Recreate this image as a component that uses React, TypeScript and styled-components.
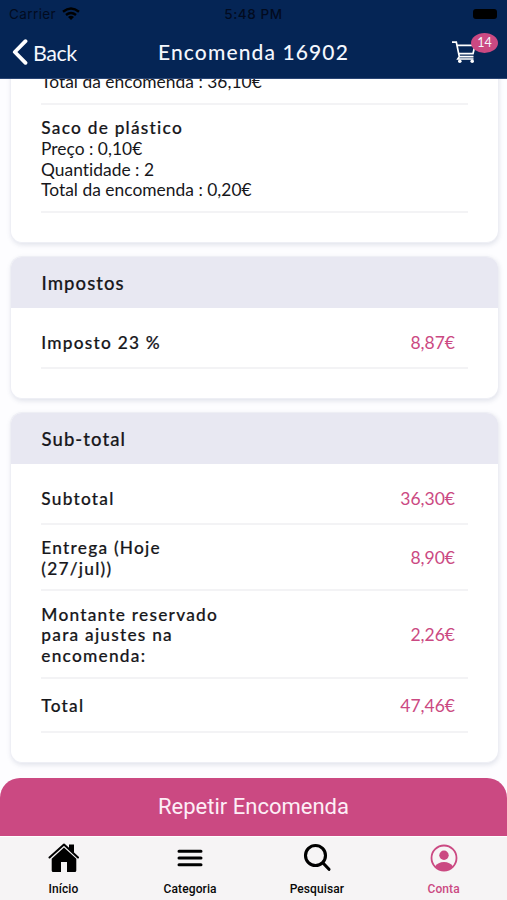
import React from 'react';
import styled, { createGlobalStyle } from 'styled-components';

const PINK = '#cb4982';

const GlobalStyle = createGlobalStyle`
  * { box-sizing: border-box; }
  body { margin: 0; background: #fdfdff; font-family: Lato, "Open Sans", sans-serif; font-variant-ligatures: none; color: #17171b; }
`;

const Screen = styled.div`
  display: flex;
  flex-direction: column;
  width: 507px;
  height: 900px;
  overflow: hidden;
`;

const Header = styled.header`
  flex: none;
  height: 79px;
  background: #052555;
  border-bottom: 1px solid #2b4674;
`;

const StatusBar = styled.div`
  display: grid;
  grid-template-columns: 1fr auto 1fr;
  align-items: center;
  height: 27px;
  padding: 0 9px;
  font-family: Inter, sans-serif;
  font-size: 13.5px;
  color: #020b1f;
`;

const Carrier = styled.div`
  display: flex;
  align-items: center;
  gap: 6px;
  letter-spacing: 0.4px;
`;

const Clock = styled.div`
  font-weight: 500;
  font-size: 13.5px;
  letter-spacing: 0.6px;
`;

const Battery = styled.div`
  justify-self: end;
  width: 24px;
  height: 10px;
  margin-right: 1px;
  border-radius: 3px;
  background: #000;
`;

const NavBar = styled.div`
  display: grid;
  grid-template-columns: 1fr auto 1fr;
  align-items: center;
  height: 50px;
  padding: 0 9px 0 12px;
  color: #f4f7fd;
`;

const BackButton = styled.div`
  display: flex;
  align-items: center;
  gap: 5px;
  font-size: 21.5px;
  letter-spacing: -0.45px;
`;

const BackText = styled.span`
  padding-top: 2px;
`;

const Title = styled.div`
  margin: -2px 3px 0 0;
  font-size: 21px;
  font-weight: 500;
  letter-spacing: 1.12px;
`;

const Cart = styled.div`
  position: relative;
  justify-self: end;
  width: 46px;
  height: 34px;
`;

const CartIcon = styled.svg`
  display: block;
  margin: 6px 0 0;
`;

const Badge = styled.span`
  position: absolute;
  top: -2px;
  right: 0;
  width: 27px;
  height: 20px;
  border-radius: 50%;
  background: ${PINK};
  font-size: 12.5px;
  line-height: 19px;
  text-align: center;
`;

const Content = styled.main`
  flex: 1;
  min-height: 0;
  display: flex;
  flex-direction: column;
  gap: 13px;
  padding: 0 9px 0 10px;
  overflow: hidden;
`;

const Card = styled.section<{ $height: number; $scrolled?: boolean }>`
  flex: none;
  height: ${(p) => p.$height}px;
  margin-top: ${(p) => (p.$scrolled ? '-20px' : '0')};
  border: 1px solid #eeeff5;
  border-right-width: 0;
  border-radius: 12px;
  background: #fff;
  box-shadow: 1px 2px 5px rgba(60, 70, 110, 0.14);
  overflow: hidden;
`;

const CardHead = styled.h2`
  height: 51px;
  margin: 0;
  padding-left: 30.5px;
  background: #e8e8f2;
  font-size: 18.5px;
  font-weight: 500;
  line-height: 52px;
  letter-spacing: 1.08px;
  -webkit-text-stroke: 0.2px;
`;

const CardBody = styled.div`
  padding: 0 30px;
`;

const Product = styled.div<{ $height: number; $cut?: boolean }>`
  height: ${(p) => p.$height}px;
  padding-top: ${(p) => (p.$cut ? 12 : 13)}px;
  border-bottom: 2px solid #f3f3f5;
  font-size: 17.4px;
  line-height: 20.8px;
  letter-spacing: 0.02px;
`;

const Label = styled.div`
  width: 190px;
  padding-left: 0.3px;
  font-size: 17.3px;
  font-weight: 500;
  line-height: 20.8px;
  letter-spacing: 1.24px;
  -webkit-text-stroke: 0.2px;
`;

const Row = styled.div<{ $height: number; $first?: boolean }>`
  display: flex;
  align-items: center;
  justify-content: space-between;
  height: ${(p) => p.$height}px;
  padding: ${(p) => (p.$first ? 11 : 3.5)}px 13px 0 0;
  border-bottom: 2px solid #f3f3f5;
`;

const Price = styled.div`
  color: ${PINK};
  font-size: 17.5px;
  line-height: 20px;
  padding-bottom: 1px;
`;

const RepeatButton = styled.div`
  flex: none;
  height: 58px;
  border-radius: 20px 20px 0 0;
  background: ${PINK};
  color: #fdeef6;
  font-family: Roboto, sans-serif;
  font-size: 22px;
  line-height: 58px;
  text-align: center;
`;

const TabBar = styled.nav`
  flex: none;
  display: grid;
  grid-template-columns: repeat(4, 1fr);
  height: 64px;
  background: #f6f4f5;
  border-top: 1px solid #fff;
`;

const Tab = styled.div<{ $active?: boolean }>`
  display: flex;
  flex-direction: column;
  align-items: center;
  padding-top: 5px;
  gap: 9px;
  color: ${(p) => (p.$active ? PINK : '#080808')};
  font-family: Roboto, sans-serif;
  font-size: 12px;
  font-weight: 500;
  letter-spacing: 0.1px;
  line-height: 13px;
`;

const SUMMARY = [
  { label: 'Subtotal', price: '36,30€', height: 61 },
  { label: 'Entrega (Hoje (27/jul))', price: '8,90€', height: 66 },
  { label: 'Montante reservado para ajustes na encomenda:', price: '2,26€', height: 88 },
  { label: 'Total', price: '47,46€', height: 54 },
];

export default function App() {
  return (
    <Screen>
      <GlobalStyle />
      <Header>
        <StatusBar>
          <Carrier>
            Carrier
            <svg width="18" height="13" viewBox="0 0 18 13" fill="none" stroke="#000" strokeWidth="2.4">
              <path d="M1 4.8Q9-1.8 17 4.8" />
              <path d="M4 8Q9 3.8 14 8" />
              <path d="M6 10Q9 7.5 12 10L9 13Z" fill="#000" stroke="none" />
            </svg>
          </Carrier>
          <Clock>5:48 PM</Clock>
          <Battery />
        </StatusBar>
        <NavBar>
          <BackButton>
            <svg width="16" height="26" viewBox="0 0 16 26" fill="none" stroke="#fff" strokeWidth="3.8" strokeLinecap="round" strokeLinejoin="round">
              <path d="M13.5 2.2L2.8 13L13.5 23.8" />
            </svg>
            <BackText>Back</BackText>
          </BackButton>
          <Title>Encomenda 16902</Title>
          <Cart>
            <CartIcon width="25" height="23" viewBox="0 0 25 23" fill="none" stroke="#fff" strokeWidth="1.7">
              <path d="M0 1.2H4.3L7.3 15.6H21.5M5 4.3H23L21 12.6H6.5M7.3 15.6L5.8 18H21.5" />
              <circle cx="7.8" cy="20.3" r="1.8" fill="#fff" stroke="none" />
              <circle cx="20.2" cy="20.3" r="1.8" fill="#fff" stroke="none" />
            </CartIcon>
            <Badge>14</Badge>
          </Cart>
        </NavBar>
      </Header>

      <Content>
        <Card $height={184} $scrolled>
          <CardBody>
            <Product $height={45} $cut>Total da encomenda : 36,10€</Product>
            <Product $height={108}>
              <Label>Saco de plástico</Label>
              Preço : 0,10€
              <br />
              Quantidade : 2
              <br />
              Total da encomenda : 0,20€
            </Product>
          </CardBody>
        </Card>
        <Card $height={143}>
          <CardHead>Impostos</CardHead>
          <CardBody>
            <Row $height={61} $first>
              <Label>Imposto 23 %</Label>
              <Price>8,87€</Price>
            </Row>
          </CardBody>
        </Card>
        <Card $height={351}>
          <CardHead>Sub-total</CardHead>
          <CardBody>
            {SUMMARY.map((item, index) => (
              <Row key={item.label} $height={item.height} $first={index === 0}>
                <Label>{item.label}</Label>
                <Price>{item.price}</Price>
              </Row>
            ))}
          </CardBody>
        </Card>
      </Content>

      <RepeatButton>Repetir Encomenda</RepeatButton>
      <TabBar>
        <Tab>
          <svg width="32" height="32" viewBox="-1 0 32 32">
            <path d="M1.5 15.5L16 2.5L30 15.5" fill="none" stroke="#000" strokeWidth="2" strokeLinecap="round" strokeLinejoin="round" />
            <path d="M21 2.5H26V11L21 6.7Z" />
            <path d="M3.7 16.7L16 5.5L28.3 16.7V28.5Q28.3 30 26.8 30H19V20H13V30H5.2Q3.7 30 3.7 28.5Z" />
          </svg>
          Início
        </Tab>
        <Tab>
          <svg width="32" height="32" viewBox="0 0 32 32" stroke="#000" strokeWidth="3" strokeLinecap="round">
            <path d="M5 9.3H27M5 16H27M5 22.7H27" />
          </svg>
          Categoria
        </Tab>
        <Tab>
          <svg width="32" height="32" viewBox="0 0 32 32" fill="none" stroke="#000" strokeWidth="3.1" strokeLinecap="round">
            <circle cx="14.5" cy="13.5" r="10" />
            <path d="M22 21L28 27.3" />
          </svg>
          Pesquisar
        </Tab>
        <Tab $active>
          <svg width="32" height="32" viewBox="0 0 32 32">
            <circle cx="16" cy="16" r="12.5" fill="none" stroke="currentColor" strokeWidth="1.8" />
            <circle cx="16" cy="13.2" r="4.7" fill="currentColor" />
            <path d="M7 24.6Q10 20 16 20T25 24.6Q21 28.6 16 28.6T7 24.6Z" fill="currentColor" />
          </svg>
          Conta
        </Tab>
      </TabBar>
    </Screen>
  );
}
